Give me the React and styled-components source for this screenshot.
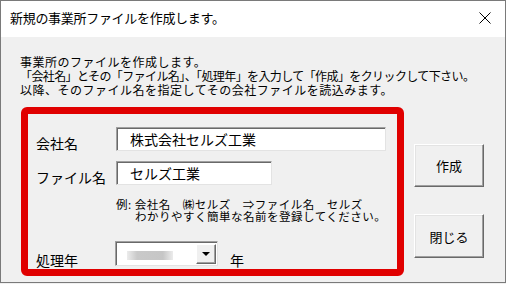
import React from "react";
import styled, { createGlobalStyle } from "styled-components";

const GlobalStyle = createGlobalStyle`
  html, body {
    margin: 0;
    padding: 0;
    background: #f0f0f0;
  }
  * {
    box-sizing: border-box;
  }
`;

const FONT = `"Noto Sans CJK JP", "Noto Sans", sans-serif`;

const Window = styled.div`
  width: 506px;
  height: 283px;
  border: 1px solid #7a7a7a;
  background: #f0f0f0;
  display: flex;
  flex-direction: column;
  font-family: ${FONT};
  color: #000;
  overflow: hidden;
`;

const TitleBar = styled.div`
  height: 36px;
  background: #fff;
  display: flex;
  align-items: center;
  justify-content: space-between;
  padding: 0 14px 2px 9px;
`;

const Title = styled.div`
  font-size: 13px;
  letter-spacing: -0.3px;
  line-height: 16px;
`;

const CloseIcon = styled.svg`
  width: 12px;
  height: 12px;
  display: block;
`;

const Body = styled.div`
  flex: 1;
  padding: 18px 0 0 19px;
`;

const Intro = styled.div`
  font-size: 12px;
  line-height: 14px;
  height: 42px;
`;

const IntroLine = styled.div`
  white-space: nowrap;
  height: 14px;
  letter-spacing: ${(p) => (p.$tight ? "-0.6px" : "0.5px")};
`;

const MainRow = styled.div`
  display: flex;
  align-items: flex-start;
  margin-top: 10px;
`;

const RedBox = styled.div`
  width: 383px;
  margin-left: 1px;
  border: 7px solid #e00000;
  border-radius: 6px;
  padding: 13px 0 3px 8px;
  display: flex;
  flex-direction: column;
`;

const FieldRow = styled.div`
  display: flex;
  align-items: flex-end;
  margin-top: ${(p) => p.$top || 0}px;
`;

const Label = styled.div`
  width: 80px;
  flex: none;
  font-size: 14px;
  line-height: 14px;
  margin-bottom: ${(p) => p.$drop ?? 1}px;
  white-space: nowrap;
`;

const TextBox = styled.div`
  width: ${(p) => p.$width}px;
  height: 24px;
  background: #fff;
  border: 1px solid;
  border-color: #a0a0a0 #e3e3e3 #e3e3e3 #a0a0a0;
  box-shadow: inset 1px 1px 0 #696969;
  display: flex;
  align-items: center;
  padding-left: 13px;
  font-size: 14px;
  white-space: nowrap;
`;

const Example = styled.div`
  margin: 13px 0 0 80px;
  font-size: 11.5px;
  line-height: 12px;
  letter-spacing: 0.5px;
  height: 24px;
`;

const ExampleLine = styled.div`
  white-space: nowrap;
  height: 12px;
  padding-left: ${(p) => p.$indent || 0}px;
`;

const Combo = styled.div`
  width: 103px;
  height: 25px;
  margin-left: -1px;
  background: #fff;
  border: 1px solid;
  border-color: #a0a0a0 #e3e3e3 #e3e3e3 #a0a0a0;
  box-shadow: inset 1px 1px 0 #696969;
  display: flex;
  align-items: stretch;
  padding: 2px 1px 1px 2px;
`;

const ComboValue = styled.div`
  flex: 1;
  display: flex;
  align-items: center;
  padding-left: 9px;
`;

const Blurred = styled.div`
  width: 46px;
  height: 9px;
  margin-top: 3px;
  background: linear-gradient(90deg, #ececec 0%, #c9c9c9 22%, #c6c6c6 78%, #ececec 100%);
  filter: blur(0.6px);
`;

const DropButton = styled.div`
  width: 20px;
  background: #f0f0f0;
  border: 1px solid;
  border-color: #fff #696969 #696969 #fff;
  box-shadow: inset -1px -1px 0 #a0a0a0;
  display: flex;
  align-items: center;
  justify-content: center;
`;

const Triangle = styled.div`
  width: 0;
  height: 0;
  border-left: 4px solid transparent;
  border-right: 4px solid transparent;
  border-top: 4px solid #000;
  margin-top: -1px;
`;

const Unit = styled.div`
  font-size: 14px;
  line-height: 14px;
  margin: 0 0 -1px 12px;
`;

const ButtonColumn = styled.div`
  display: flex;
  flex-direction: column;
  gap: 27px;
  padding-top: 37px;
  margin-left: 10px;
`;

const Button = styled.button`
  width: 70px;
  height: ${(p) => p.$height}px;
  background: #f0f0f0;
  border: 1px solid;
  border-color: #fff #696969 #696969 #fff;
  box-shadow: inset -1px -1px 0 #a0a0a0, inset 1px 1px 0 #e3e3e3;
  font-family: ${FONT};
  font-size: 13px;
  color: #000;
  padding: 0;
  cursor: pointer;
`;

export default function App() {
  return (
    <>
      <GlobalStyle />
      <Window>
        <TitleBar>
          <Title>新規の事業所ファイルを作成します。</Title>
          <CloseIcon viewBox="0 0 12 12">
            <path d="M0.5 0.5 L11.5 11.5 M11.5 0.5 L0.5 11.5" stroke="#000" strokeWidth="1" fill="none" />
          </CloseIcon>
        </TitleBar>
        <Body>
          <Intro>
            <IntroLine>事業所のファイルを作成します。</IntroLine>
            <IntroLine $tight>「会社名」とその「ファイル名」、「処理年」を入力して「作成」をクリックして下さい。</IntroLine>
            <IntroLine>以降、そのファイル名を指定してその会社ファイルを読込みます。</IntroLine>
          </Intro>
          <MainRow>
            <RedBox>
              <FieldRow>
                <Label>会社名</Label>
                <TextBox $width={270}>株式会社セルズ工業</TextBox>
              </FieldRow>
              <FieldRow $top={10}>
                <Label>ファイル名</Label>
                <TextBox $width={156}>セルズ工業</TextBox>
              </FieldRow>
              <Example>
                <ExampleLine>例: 会社名　㈱セルズ　⇒ファイル名　セルズ</ExampleLine>
                <ExampleLine $indent={19}>わかりやすく簡単な名前を登録してください。</ExampleLine>
              </Example>
              <FieldRow $top={19}>
                <Label $drop={-1}>処理年</Label>
                <Combo>
                  <ComboValue>
                    <Blurred />
                  </ComboValue>
                  <DropButton>
                    <Triangle />
                  </DropButton>
                </Combo>
                <Unit>年</Unit>
              </FieldRow>
            </RedBox>
            <ButtonColumn>
              <Button $height={43}>作成</Button>
              <Button $height={44}>閉じる</Button>
            </ButtonColumn>
          </MainRow>
        </Body>
      </Window>
    </>
  );
}
